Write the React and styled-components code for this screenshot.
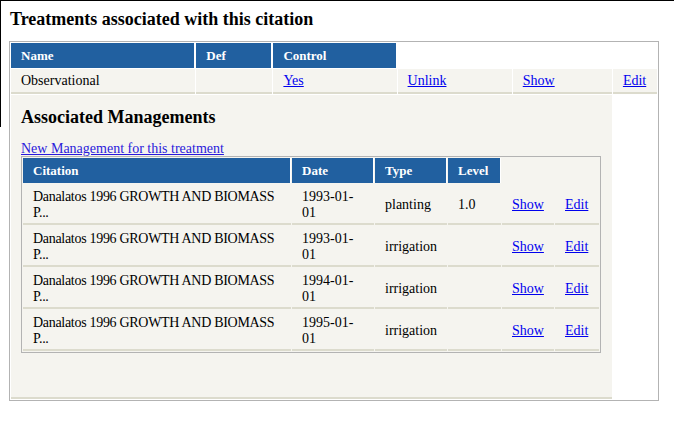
import React from "react";
import styled, { createGlobalStyle } from "styled-components";

const Global = createGlobalStyle`
  html, body { margin: 0; padding: 0; background: #fff; }
  body { font-family: "Liberation Serif", "Times New Roman", serif; font-size: 14px; color: #000; }
  a { color: #0000ee; }
`;

const Frame = styled.div`
  position: relative;
  border-top: 1px solid #000;
  padding-left: 9px;
  &::before {
    content: "";
    position: absolute;
    left: 0;
    top: 0;
    width: 1px;
    height: 126px;
    background: #000;
  }
`;

const Title = styled.h2`
  margin: 0;
  padding: 6px 0 0 1px;
  font-size: 18px;
  line-height: 24px;
  font-weight: bold;
`;

const OuterTable = styled.table`
  margin-top: 10px;
  border: 1px solid #b3b3b3;
  border-spacing: 1px;
  width: 650px;
  table-layout: fixed;
`;

const Head = styled.th`
  background: #2160a0;
  color: #fff;
  font-weight: bold;
  font-size: 13px;
  text-align: left;
  padding: 5px 10px 4px 10px;
  line-height: 16px;
  border: 1px solid #fff;
  border-width: 0 1px 0 0;
`;

const Cell = styled.td`
  background: #f5f4ef;
  padding: 4px 10px 3px 10px;
  line-height: 16px;
  vertical-align: middle;
  border-bottom: 2px solid #dcdbcd;
`;

const Blank = styled.td`
  padding: 0;
`;

const PanelCell = styled.td`
  background: #f5f4ef;
  padding: 10px 10px 44px 10px;
  vertical-align: top;
  border-bottom: 2px solid #dcdbcd;
`;

const SubTitle = styled.h3`
  margin: 0;
  padding-top: 1px;
  font-size: 18px;
  line-height: 22px;
  font-weight: bold;
`;

const NewLink = styled.a`
  display: block;
  margin-top: 14px;
  line-height: 14px;
  color: #2a1adb;
`;

const InnerTable = styled.table`
  border: 1px solid #b3b3b3;
  border-spacing: 1px;
  width: 580px;
  table-layout: fixed;
`;

const RowCell = styled(Cell)`
  padding: 5px 10px 2px 10px;
`;

const CitationCell = styled(RowCell)`
  letter-spacing: -0.3px;
`;

const outerCols = [184, 76, 123, 114, 99, 44];
const innerCols = [268, 82, 72, 53, 52, 44];

const rows = [
  { date: "1993-01-01", type: "planting", level: "1.0" },
  { date: "1993-01-01", type: "irrigation", level: "" },
  { date: "1994-01-01", type: "irrigation", level: "" },
  { date: "1995-01-01", type: "irrigation", level: "" },
];

export default function App() {
  return (
    <>
      <Global />
      <Frame>
        <Title>Treatments associated with this citation</Title>
        <OuterTable>
          <colgroup>
            {outerCols.map((w, i) => (
              <col key={i} style={{ width: w }} />
            ))}
          </colgroup>
          <tbody>
            <tr>
              <Head>Name</Head>
              <Head>Def</Head>
              <Head>Control</Head>
              <Blank />
              <Blank />
              <Blank />
            </tr>
            <tr>
              <Cell>Observational</Cell>
              <Cell />
              <Cell><a href="#">Yes</a></Cell>
              <Cell><a href="#">Unlink</a></Cell>
              <Cell><a href="#">Show</a></Cell>
              <Cell><a href="#">Edit</a></Cell>
            </tr>
            <tr>
              <PanelCell colSpan={5}>
                <SubTitle>Associated Managements</SubTitle>
                <NewLink href="#">New Management for this treatment</NewLink>
                <InnerTable>
                  <colgroup>
                    {innerCols.map((w, i) => (
                      <col key={i} style={{ width: w }} />
                    ))}
                  </colgroup>
                  <tbody>
                    <tr>
                      <Head>Citation</Head>
                      <Head>Date</Head>
                      <Head>Type</Head>
                      <Head>Level</Head>
                      <Blank />
                      <Blank />
                    </tr>
                    {rows.map((r, i) => (
                      <tr key={i}>
                        <CitationCell>Danalatos 1996 GROWTH AND BIOMASS P...</CitationCell>
                        <RowCell>{r.date}</RowCell>
                        <RowCell>{r.type}</RowCell>
                        <RowCell>{r.level}</RowCell>
                        <RowCell><a href="#">Show</a></RowCell>
                        <RowCell><a href="#">Edit</a></RowCell>
                      </tr>
                    ))}
                  </tbody>
                </InnerTable>
              </PanelCell>
              <Blank />
            </tr>
          </tbody>
        </OuterTable>
      </Frame>
    </>
  );
}
